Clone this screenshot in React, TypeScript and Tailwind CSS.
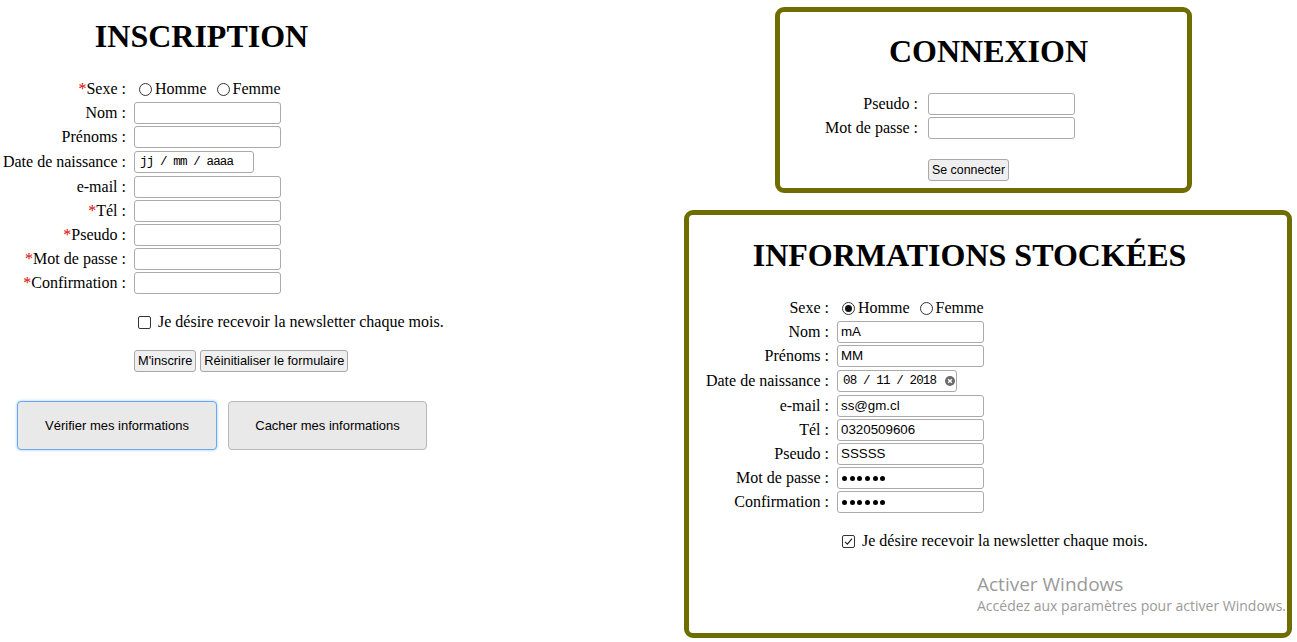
import React from 'react';

const serif = "font-['Liberation_Serif',serif]";
const sans = "font-['Liberation_Sans',Arial,sans-serif]";
const mono = "font-['Liberation_Mono',monospace]";

function Star() {
  return <span className="text-[#e00000]">*</span>;
}

function Radio({ checked = false }: { checked?: boolean }) {
  return (
    <span className="inline-flex w-[13px] h-[13px] rounded-full border border-[#333] items-center justify-center mr-[3px] shrink-0">
      {checked && <span className="w-[7px] h-[7px] rounded-full bg-[#111]" />}
    </span>
  );
}

function Checkbox({ checked = false }: { checked?: boolean }) {
  return (
    <span className="inline-flex w-[13px] h-[13px] border border-[#333] rounded-[2px] items-center justify-center shrink-0 bg-white">
      {checked && (
        <svg width="11" height="11" viewBox="0 0 11 11">
          <path d="M2 5.8 L4.4 8.2 L9 2.6" fill="none" stroke="#222" strokeWidth="1.2" />
        </svg>
      )}
    </span>
  );
}

function Field({ value, w = 'w-[147px]', password = false }: { value?: string; w?: string; password?: boolean }) {
  return (
    <div className={`${w} h-[22px] border border-[#aaaaaa] rounded-[3px] bg-white flex items-center pl-[3px] text-[13.33px] text-black ${sans}`}>
      {password ? (
        <span className="flex gap-[2.7px] pl-[1px]">
          {Array.from({ length: 6 }).map((_, i) => (
            <span key={i} className="w-[5px] h-[5px] rounded-full bg-black" />
          ))}
        </span>
      ) : (
        value
      )}
    </div>
  );
}

function DateField({ value, clear = false }: { value: string; clear?: boolean }) {
  return (
    <div className={`w-[120px] h-[22px] border border-[#aaaaaa] rounded-[3px] bg-white flex items-center pl-[5px] text-[12.5px] tracking-[-0.85px] text-black ${mono}`}>
      <span className="whitespace-pre">{value}</span>
      {clear && (
        <svg className="ml-[9px]" width="10" height="10" viewBox="0 0 10 10">
          <circle cx="5" cy="5" r="5" fill="#6b6b6b" />
          <path d="M3.2 3.2 L6.8 6.8 M6.8 3.2 L3.2 6.8" stroke="#fff" strokeWidth="1.4" />
        </svg>
      )}
    </div>
  );
}

function Row({ label, req = false, lw, h = 'h-[24px]', children }: { label: string; req?: boolean; lw: string; h?: string; children: React.ReactNode }) {
  return (
    <div className={`flex items-center ${h}`}>
      <div className={`${lw} text-right whitespace-nowrap`}>
        {req && <Star />}
        {label} :
      </div>
      <div className="ml-[8px] flex items-center">{children}</div>
    </div>
  );
}

function Sexe({ checked }: { checked: boolean }) {
  return (
    <div className="flex items-center ml-[5px]">
      <Radio checked={checked} />
      <span>Homme</span>
      <span className="ml-[10px]" />
      <Radio />
      <span>Femme</span>
    </div>
  );
}

function SmallButton({ children }: { children: React.ReactNode }) {
  return (
    <button className={`h-[22px] px-[3px] border border-[#a8a8a8] rounded-[3px] bg-[#efefef] text-[12.8px] text-black ${sans}`}>
      {children}
    </button>
  );
}

export default function App() {
  return (
    <div className={`relative w-[1297px] h-[642px] bg-white text-black text-[16px] leading-[18px] overflow-hidden flex ${serif}`}>
      {/* Inscription */}
      <div className="w-[684px] shrink-0">
        <h1 className="w-[403px] mt-[18px] text-center text-[32px] leading-[37px] font-bold">INSCRIPTION</h1>
        <div className="mt-[22px]">
          <Row label="Sexe" req lw="w-[126px]">
            <Sexe checked={false} />
          </Row>
          <Row label="Nom" lw="w-[126px]"><Field /></Row>
          <Row label="Prénoms" lw="w-[126px]"><Field /></Row>
          <Row label="Date de naissance" lw="w-[126px]" h="h-[26px]"><DateField value="jj / mm / aaaa" /></Row>
          <Row label="e-mail" lw="w-[126px]"><Field /></Row>
          <Row label="Tél" req lw="w-[126px]"><Field /></Row>
          <Row label="Pseudo" req lw="w-[126px]"><Field /></Row>
          <Row label="Mot de passe" req lw="w-[126px]"><Field /></Row>
          <Row label="Confirmation" req lw="w-[126px]"><Field /></Row>
        </div>
        <div className="mt-[18px] h-[18px] flex items-center pl-[138px]">
          <Checkbox />
          <span className="ml-[7px]">Je désire recevoir la newsletter chaque mois.</span>
        </div>
        <div className="mt-[19px] flex gap-[4px] pl-[134px]">
          <SmallButton>M'inscrire</SmallButton>
          <SmallButton>Réinitialiser le formulaire</SmallButton>
        </div>
        <div className={`mt-[29px] ml-[17px] flex gap-[11px] text-[13px] ${sans}`}>
          <button className="w-[200px] h-[49px] rounded-[4px] border border-[#6aa8ef] bg-[#e9e9e9] shadow-[0_0_3px_#9cc6f5]">
            Vérifier mes informations
          </button>
          <button className="w-[199px] h-[49px] rounded-[4px] border border-[#b8b8b8] bg-[#e9e9e9]">
            Cacher mes informations
          </button>
        </div>
      </div>

      {/* Right column */}
      <div className="w-[608px] shrink-0 pt-[7px]">
        <div className="ml-[91px] w-[417px] h-[186px] border-[5px] border-[#6f6d00] rounded-[9px]">
          <h1 className="pl-[10px] mt-[21px] text-center text-[32px] leading-[37px] font-bold">CONNEXION</h1>
          <div className="mt-[22px]">
            <Row label="Pseudo" lw="w-[138px]"><div className="ml-[2px]"><Field /></div></Row>
            <Row label="Mot de passe" lw="w-[138px]"><div className="ml-[2px]"><Field /></div></Row>
          </div>
          <div className="mt-[19px] pl-[148px] flex">
            <button className={`h-[22px] px-[3px] border border-[#a8a8a8] rounded-[3px] bg-[#efefef] text-[12.4px] ${sans}`}>
              Se connecter
            </button>
          </div>
        </div>

        <div className="mt-[17px] w-[608px] h-[428px] border-[5px] border-[#6f6d00] rounded-[9px]">
          <h1 className="pr-[37px] mt-[22px] text-center text-[32px] leading-[37px] font-bold">INFORMATIONS STOCKÉES</h1>
          <div className="mt-[22px]">
            <Row label="Sexe" lw="w-[140px]"><Sexe checked /></Row>
            <Row label="Nom" lw="w-[140px]"><Field value="mA" /></Row>
            <Row label="Prénoms" lw="w-[140px]"><Field value="MM" /></Row>
            <Row label="Date de naissance" lw="w-[140px]" h="h-[26px]"><DateField value="08 / 11 / 2018" clear /></Row>
            <Row label="e-mail" lw="w-[140px]"><Field value="ss@gm.cl" /></Row>
            <Row label="Tél" lw="w-[140px]"><Field value="0320509606" /></Row>
            <Row label="Pseudo" lw="w-[140px]"><Field value="SSSSS" /></Row>
            <Row label="Mot de passe" lw="w-[140px]"><Field password /></Row>
            <Row label="Confirmation" lw="w-[140px]"><Field password /></Row>
          </div>
          <div className="mt-[18px] h-[18px] flex items-center pl-[153px]">
            <Checkbox checked />
            <span className="ml-[7px]">Je désire recevoir la newsletter chaque mois.</span>
          </div>
        </div>
      </div>

      {/* Windows activation watermark */}
      <div className="absolute left-[977px] top-[572px] text-[#9a9a9a] font-['Open_Sans',sans-serif] pointer-events-none">
        <div className="text-[19px] leading-[24px]">Activer Windows</div>
        <div className="text-[14px] leading-[20px] whitespace-nowrap">Accédez aux paramètres pour activer Windows.</div>
      </div>
    </div>
  );
}
